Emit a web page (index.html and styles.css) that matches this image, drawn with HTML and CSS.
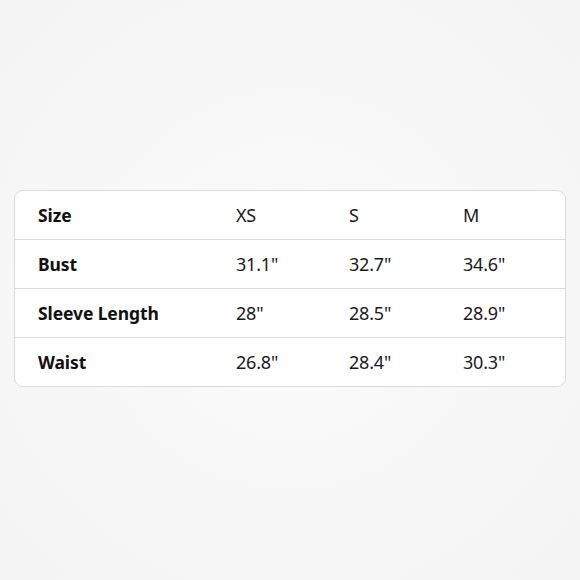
FILE: index.html
```html
<!DOCTYPE html>
<html lang="en">
<head>
<meta charset="utf-8">
<title>Size Chart</title>
<link rel="stylesheet" href="styles.css">
</head>
<body>
<main class="page">
  <div class="card">
    <div class="row">
      <div class="label">Size</div>
      <div class="cell">XS</div>
      <div class="cell">S</div>
      <div class="cell">M</div>
    </div>
    <div class="row">
      <div class="label">Bust</div>
      <div class="cell">31.1"</div>
      <div class="cell">32.7"</div>
      <div class="cell">34.6"</div>
    </div>
    <div class="row">
      <div class="label">Sleeve Length</div>
      <div class="cell">28"</div>
      <div class="cell">28.5"</div>
      <div class="cell">28.9"</div>
    </div>
    <div class="row">
      <div class="label">Waist</div>
      <div class="cell">26.8"</div>
      <div class="cell">28.4"</div>
      <div class="cell">30.3"</div>
    </div>
  </div>
</main>
</body>
</html>
```
FILE: styles.css
```css
html, body {
  margin: 0;
  padding: 0;
}
body {
  width: 580px;
  height: 580px;
  background: radial-gradient(ellipse at 50% 50%, #fbfbfb 0%, #f7f7f7 55%, #f4f4f4 100%);
  font-family: "Noto Sans", "Open Sans", "DejaVu Sans", sans-serif;
  color: #1c1c1c;
}
.page {
  box-sizing: border-box;
  height: 580px;
  padding: 190px 14px 0 14px;
}
.card {
  background: #ffffff;
  border: 1px solid #dcdcdc;
  border-radius: 9px;
  overflow: hidden;
}
.row {
  display: grid;
  grid-template-columns: 198px 113px 114px 1fr;
  align-items: center;
  height: 48px;
  padding-left: 23px;
  border-top: 1px solid #dcdcdc;
}
.row:first-child {
  border-top: none;
}
.label {
  font-weight: 700;
  font-size: 17.5px;
  letter-spacing: -0.1px;
  color: #111111;
}
.cell {
  font-size: 18px;
  letter-spacing: -0.2px;
  color: #1a1a1a;
}
```
